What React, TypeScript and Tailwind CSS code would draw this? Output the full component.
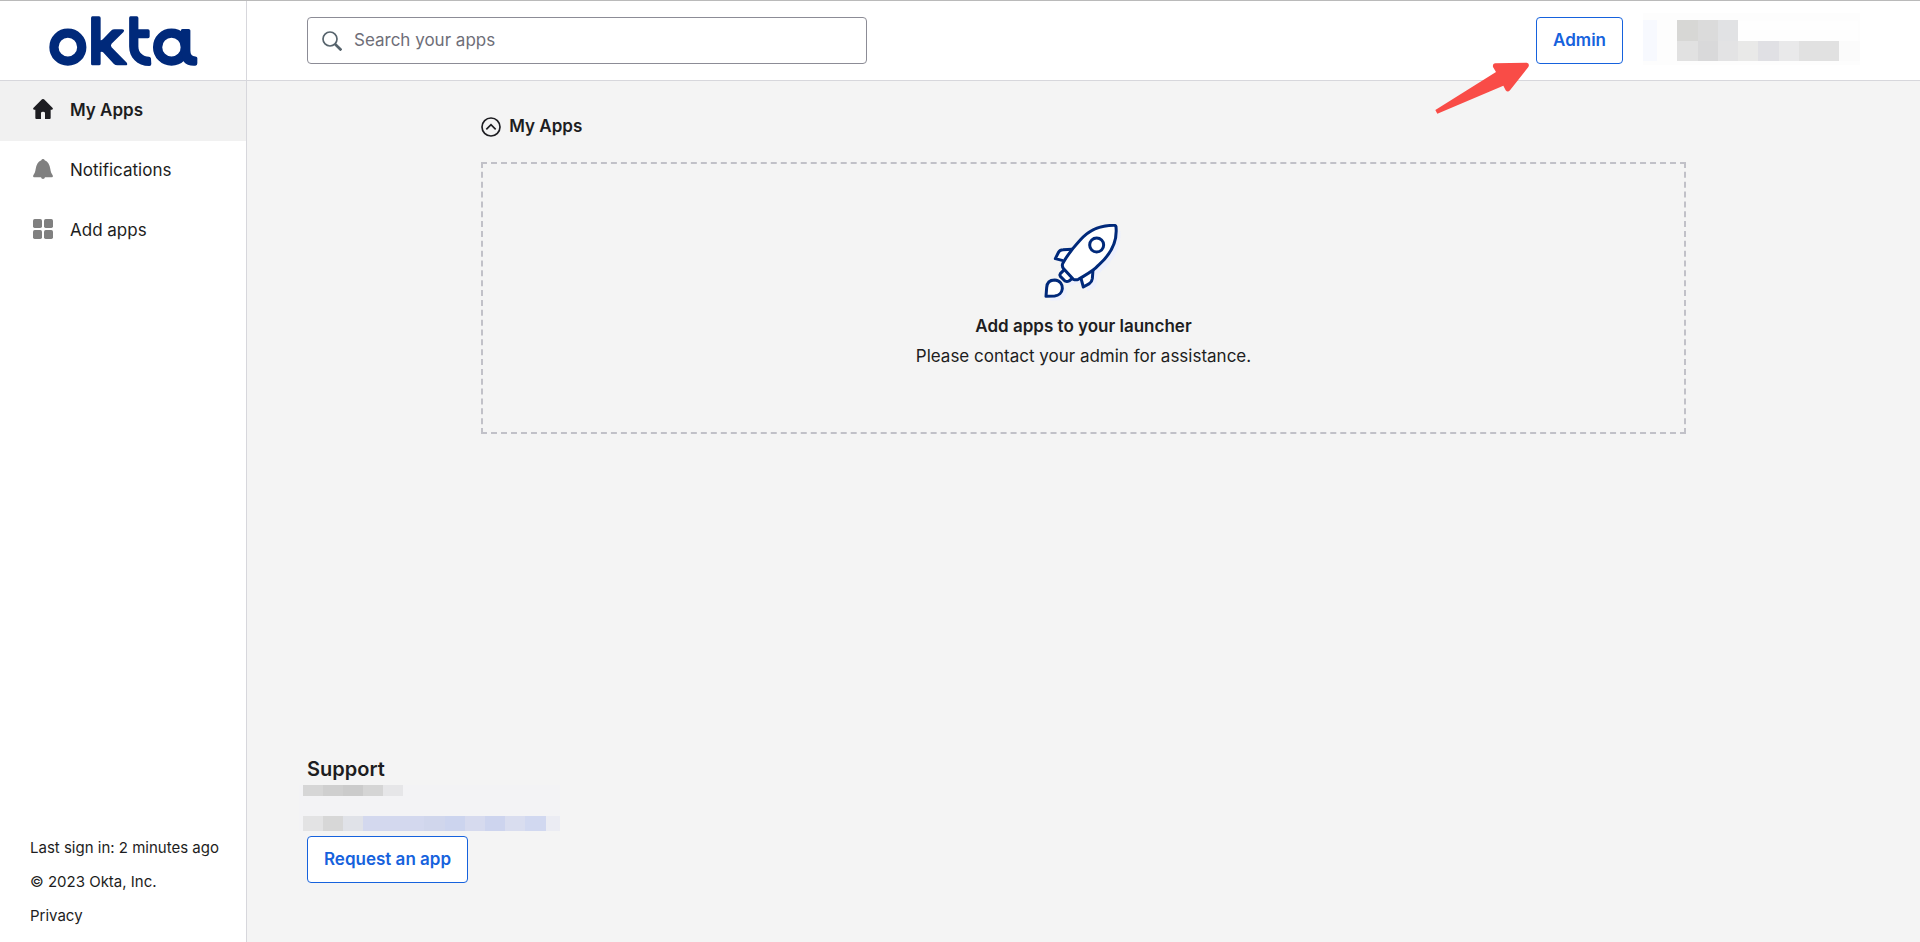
import type { ReactNode } from "react";
import { clsx } from "clsx";

function OktaLogo() {
  return (
    <svg viewBox="147 47 448 151" className="h-[50px] w-[149px]" fill="#00297a" role="img" aria-label="okta">
      <circle cx="203" cy="141" r="42" fill="none" stroke="#00297a" strokeWidth="28" />
      <path d="M277 48H297Q302 48 302 53V120Q306 121 310 116L334 91Q338 87 344 87H366Q376 87 371 95L335 131Q331 136 335 141L381 188Q385 196 377 196H353Q346 196 342 192L310 157Q306 153 302 156V191Q302 196 297 196H277Q273 196 273 191V53Q273 48 277 48Z" />
      <path d="M392 48H411Q416 48 416 53V87H445Q450 87 450 92V109Q450 114 445 114H416V139C416 158 430 169 448 170Q453 170 454 175L455 192Q455 198 449 198C412 198 388 172 388 139V53Q388 48 392 48Z" />
      <circle cx="516" cy="141" r="42" fill="none" stroke="#00297a" strokeWidth="28" />
      <path d="M544 92Q544 86 549 86H568Q573 86 573 91V152C573 163 578 169 588 169Q594 169 594 174V190Q594 197 588 197C572 198 560 194 553 185L544 150Z" />
    </svg>
  );
}

function HomeIcon() {
  return (
    <svg viewBox="0 0 60 60" className="size-5" fill="currentColor" aria-hidden="true">
      <path d="M27 1Q30-1 33 1L59 27Q61 31 57 32H53V57Q53 60 50 60H36V42Q36 38 30 38T24 42V60H10Q7 60 7 57V32H3Q-1 31 1 27Z" />
    </svg>
  );
}

function BellIcon() {
  return (
    <svg viewBox="0 0 60 60" className="size-5" fill="currentColor" aria-hidden="true">
      <path d="M25 4Q26 0 30 0T35 4C45 8 50 17 52 30C53 38 55 43 59 49Q61 54 57 55H36Q35 60 30 60T24 55H3Q-1 54 1 49C5 43 7 38 8 30C10 17 15 8 25 4Z" />
    </svg>
  );
}

function GridIcon() {
  return (
    <svg viewBox="0 0 60 60" className="size-5" fill="currentColor" aria-hidden="true">
      <rect width="27" height="27" rx="5" />
      <rect x="33" width="27" height="27" rx="5" />
      <rect y="33" width="27" height="27" rx="5" />
      <rect x="33" y="33" width="27" height="27" rx="5" />
    </svg>
  );
}

function SearchIcon() {
  return (
    <svg viewBox="0 0 60 60" className="size-5 shrink-0" fill="none" stroke="#56636c" aria-hidden="true">
      <circle cx="24" cy="24" r="21" strokeWidth="5" />
      <path d="M39 39L58 58" strokeWidth="8" />
    </svg>
  );
}

function CollapseIcon() {
  return (
    <svg viewBox="0 0 60 60" className="size-5" fill="none" stroke="currentColor" strokeWidth="5" aria-hidden="true">
      <circle cx="30" cy="30" r="27" />
      <path d="M16 37L30 23L44 37" />
    </svg>
  );
}

const BODY = "M252 45C215 45 180 55 150 90C128 114 110 137 98 160Q95 168 101 175L130 207Q138 210 145 207C168 193 190 183 205 165C245 130 262 90 258 50Q258 45 252 45Z";
const LEFT_FIN = "M126 117L99 118Q90 118 86 125L76 145L99 151";
const RIGHT_FIN = "M189 178L187 205Q186 214 178 220L160 230L153 204";
const THRUSTER = "M103 178L91 190Q88 194 91 198L105 212Q111 215 117 212L127 204";
const FLAME = "M48 258L50 232C51 216 61 209 74 209C90 210 98 222 97 235C96 247 86 256 74 257Z";

function Rocket() {
  return (
    <svg viewBox="42 41 234 240" className="h-20 w-[78px]" aria-hidden="true">
      <g transform="translate(13 13)" fill="#edf0fd">
        <path d={BODY} />
        <path d={LEFT_FIN} />
        <path d={RIGHT_FIN} />
        <path d={THRUSTER} />
        <path d={FLAME} />
      </g>
      <g fill="#fff" stroke="#00297a" strokeWidth="9" strokeLinejoin="round">
        <path d={LEFT_FIN} />
        <path d={RIGHT_FIN} />
        <path d={THRUSTER} />
        <path d={FLAME} />
        <path d={BODY} />
        <circle cx="200" cy="104" r="21" />
      </g>
    </svg>
  );
}

function Arrow() {
  return (
    <svg
      viewBox="45 188 285 156"
      className="pointer-events-none absolute top-[45px] right-full mr-1.5 h-[52px] w-[95px]"
      fill="#f94c47"
      aria-hidden="true"
    >
      <path d="M46 332L228 218L219 203Q217 193 225 192L320 190Q330 192 325 203L270 273Q263 280 257 273L250 259L52 343Z" />
    </svg>
  );
}

// Redacted account menu
function AccountMosaic() {
  return (
    <svg viewBox="0 0 217 55" className="h-[55px] w-[217px]" shapeRendering="crispEdges" aria-hidden="true">
      <rect width="217" height="52" fill="#fdfdfd" />
      <rect y="7" width="14" height="41" fill="#f7f9fe" />
      <rect x="95" y="8" width="120" height="20" fill="#fefefe" />
      <rect x="34" y="7" width="21" height="21" fill="#d7d7d5" />
      <rect x="55" y="7" width="20" height="21" fill="#dbdbdb" />
      <rect x="75" y="7" width="20" height="21" fill="#e1e2e4" />
      <rect x="34" y="28" width="21" height="20" fill="#e1e1e1" />
      <rect x="55" y="28" width="20" height="20" fill="#d9d9da" />
      <rect x="75" y="28" width="20" height="20" fill="#e3e3e4" />
      <rect x="95" y="28" width="20" height="20" fill="#e9e9e8" />
      <rect x="115" y="28" width="21" height="20" fill="#e0e0e4" />
      <rect x="136" y="28" width="20" height="20" fill="#e9e9ea" />
      <rect x="156" y="28" width="40" height="20" fill="#e1e1e1" />
      <rect x="196" y="28" width="21" height="20" fill="#fbfbfb" />
    </svg>
  );
}

// Redacted support contact
function ContactMosaic() {
  return (
    <svg viewBox="0 0 261 46" className="-ml-2 h-[46px] w-[261px]" shapeRendering="crispEdges" aria-hidden="true">
      <rect width="261" height="46" fill="#f3f3f5" />
      <rect x="4" width="20" height="11" fill="#d6d6d6" />
      <rect x="24" width="20" height="11" fill="#cfcfcf" />
      <rect x="44" width="20" height="11" fill="#cbcbcb" />
      <rect x="64" width="20" height="11" fill="#d5d5d5" />
      <rect x="84" width="20" height="11" fill="#e6e6e8" />
      <rect x="4" y="31" width="20" height="15" fill="#e3e3e4" />
      <rect x="24" y="31" width="20" height="15" fill="#d7d7d7" />
      <rect x="44" y="31" width="20" height="15" fill="#e0e2e8" />
      <rect x="64" y="31" width="61" height="15" fill="#d3d8ee" />
      <rect x="125" y="31" width="21" height="15" fill="#d0d6ec" />
      <rect x="146" y="31" width="20" height="15" fill="#ccd4ee" />
      <rect x="166" y="31" width="20" height="15" fill="#d6daee" />
      <rect x="186" y="31" width="20" height="15" fill="#cdd4ee" />
      <rect x="206" y="31" width="20" height="15" fill="#d9ddef" />
      <rect x="226" y="31" width="21" height="15" fill="#d1d8f0" />
      <rect x="247" y="31" width="14" height="15" fill="#ebecf3" />
    </svg>
  );
}

function NavItem({ icon, label, active = false }: { icon: ReactNode; label: string; active?: boolean }) {
  return (
    <a
      href="#"
      aria-current={active ? "page" : undefined}
      className={clsx("flex h-15 items-center gap-[17px] pb-0.5 pl-[33px]", active && "bg-[#f1f1f1] font-semibold")}
    >
      <span className={clsx("pb-0.5", active ? "text-[#1d1d21]" : "text-[#808080]")}>{icon}</span>
      {label}
    </a>
  );
}

function OutlineButton({ children }: { children: ReactNode }) {
  return (
    <button
      type="button"
      className="h-[47px] rounded border border-[#1662dd] bg-white px-4 pb-0.5 font-semibold text-[#1662dd]"
    >
      {children}
    </button>
  );
}

export default function App() {
  return (
    <div className="flex min-h-screen border-t border-[#bababa] bg-[#f4f4f4] font-['Inter',sans-serif] text-[17px] leading-6 text-[#1d1d21]">
      <aside className="flex w-[247px] shrink-0 flex-col border-r border-[#d7d7dc] bg-white">
        <div className="flex h-20 items-center justify-center border-b border-[#d7d7dc]">
          <OktaLogo />
        </div>
        <nav>
          <NavItem icon={<HomeIcon />} label="My Apps" active />
          <NavItem icon={<BellIcon />} label="Notifications" />
          <NavItem icon={<GridIcon />} label="Add apps" />
        </nav>
        <footer className="mt-auto flex flex-col gap-[10px] pb-[14px] pl-[30px] text-[15px] leading-6">
          <p>Last sign in: 2 minutes ago</p>
          <p>© 2023 Okta, Inc.</p>
          <a href="#">Privacy</a>
        </footer>
      </aside>

      <div className="flex min-w-0 grow flex-col">
        <header className="flex h-20 items-center justify-between border-b border-[#d7d7dc] bg-white px-15">
          <label className="flex h-[47px] w-[560px] items-center gap-3 rounded border border-[#8c8c96] px-[14px]">
            <SearchIcon />
            <input
              type="search"
              aria-label="Search your apps"
              placeholder="Search your apps"
              className="w-full bg-transparent pb-0.5 outline-none placeholder:text-[#6e6e78]"
            />
          </label>
          <div className="flex items-center gap-5">
            <div className="relative">
              <OutlineButton>Admin</OutlineButton>
              <Arrow />
            </div>
            <AccountMosaic />
          </div>
        </header>

        <main className="flex grow flex-col">
          <section className="mx-auto w-[72%] pt-[34px]">
            <h2 className="flex h-6 items-center font-semibold">
              <button type="button" className="flex items-center gap-2">
                <CollapseIcon />
                <span className="pb-0.5">My Apps</span>
              </button>
            </h2>
            <div className="mt-[23px] flex flex-col items-center border-2 border-dashed border-[#c1c1c8] pt-15 pb-16">
              <Rocket />
              <h3 className="mt-[10px] font-semibold">Add apps to your launcher</h3>
              <p className="mt-[6px]">Please contact your admin for assistance.</p>
            </div>
          </section>

          <section className="mt-auto px-15 pb-[59px]">
            <h2 className="text-xl leading-8 font-semibold">Support</h2>
            <ContactMosaic />
            <div className="mt-[5px]">
              <OutlineButton>Request an app</OutlineButton>
            </div>
          </section>
        </main>
      </div>
    </div>
  );
}
